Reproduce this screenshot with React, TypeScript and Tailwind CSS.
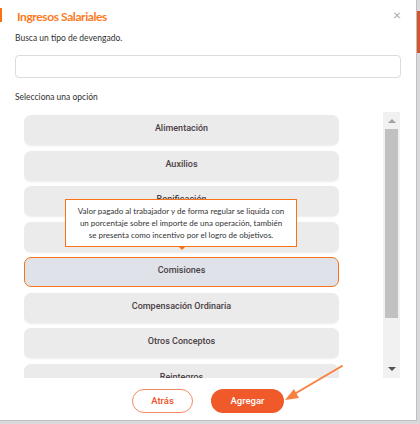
import React from 'react'

const options = [
  'Alimentación',
  'Auxilios',
  'Bonificación',
  'Cesantías',
  'Comisiones',
  'Compensación Ordinaria',
  'Otros Conceptos',
  'Reintegros',
]

const lato = { fontFamily: 'Lato, "Open Sans", sans-serif' }
const roboto = { fontFamily: 'Roboto, "Liberation Sans", sans-serif' }

export default function App() {
  const selected = 'Comisiones'

  return (
    <div className="relative w-[420px] h-[424px] overflow-hidden bg-[#d9d9dc]">
      {/* page behind the modal */}
      <div className="absolute right-0 top-[11px] h-[42px] w-[4px] bg-[#d4552e]" />

      <div
        className="relative flex h-[421px] w-[417px] flex-col border-r border-b border-[#bdbdc2] bg-white"
        style={lato}
      >
        <div className="absolute left-0 top-[8px] h-[14px] w-[2px] bg-[#f97316]" />

        {/* header */}
        <div className="flex items-start justify-between pl-[17px] pr-[15px] pt-[9px]">
          <h1 className="text-[12px] font-bold leading-[16px] tracking-[-0.4px] text-[#fb7a1e]">Ingresos Salariales</h1>
          <button className="mt-[-1px] text-[14px] leading-[14px] text-[#a8a8a8]">×</button>
        </div>

        <div className="px-[15px]">
          <p className="mt-[7px] text-[8.5px] leading-[12px] text-[#2f2f2f]">Busca un tipo de devengado.</p>
          <input
            type="text"
            className="mt-[11px] block h-[23px] w-[386px] rounded-[4px] border border-[#dcdcdc] bg-white px-2 text-[10px] outline-none"
          />
          <p className="mt-[13px] text-[8.5px] leading-[12px] text-[#2f2f2f]">Selecciona una opción</p>
        </div>

        {/* list */}
        <div className="relative mt-[9px] flex h-[266px] pl-[24px] pr-[16px]">
          <div className="h-full w-[315px] overflow-hidden pt-[3px]">
            <div className="flex flex-col gap-[5.5px]" style={roboto}>
              {options.map((o) => (
                <div
                  key={o}
                  className={
                    o === selected
                      ? 'flex h-[30px] shrink-0 items-center justify-center rounded-[7px] border border-[#f97316] bg-[#dfe2e8] pb-[2px] text-[9px] font-medium text-[#4a3e45]'
                      : 'flex h-[30px] shrink-0 items-center justify-center rounded-[7px] bg-[#ebebeb] pb-[2px] text-[9px] font-medium text-[#4a3e45] shadow-[0_1px_2px_rgba(0,0,0,0.08)]'
                  }
                >
                  {o}
                </div>
              ))}
            </div>
          </div>

          {/* scrollbar */}
          <div className="ml-auto flex h-full w-[17px] flex-col items-center bg-[#f1f1f1]">
            <div className="mt-[7px] h-0 w-0 border-x-[4px] border-b-[4px] border-x-transparent border-b-[#a3a3a3]" />
            <div className="mt-[6px] h-[189px] w-[13px] bg-[#c1c1c1]" />
            <div className="mt-auto mb-[7px] h-0 w-0 border-x-[4px] border-t-[4px] border-x-transparent border-t-[#505050]" />
          </div>

          {/* tooltip */}
          <div className="absolute left-[65px] top-[87px] w-[232px] border-[1.5px] border-[#f97316] bg-white px-1 py-[5px] text-center text-[8px] leading-[12px] text-[#333]">
            Valor pagado al trabajador y de forma regular se liquida con
            <br />
            un porcentaje sobre el importe de una operación, también
            <br />
            se presenta como incentivo por el logro de objetivos.
            <div className="absolute left-[112px] top-full h-0 w-0 border-x-[4px] border-t-[4px] border-x-transparent border-t-[#f97316]" />
          </div>
        </div>

        {/* footer */}
        <div className="mt-[11px] flex justify-center gap-[18px]" style={roboto}>
          <button className="h-[24px] w-[61px] rounded-full border border-[#f58a5e] bg-white text-[9.5px] font-medium text-[#f0512b]">
            Atrás
          </button>
          <button className="h-[24px] w-[73px] rounded-full bg-[#f05a2a] text-[9.5px] font-medium text-white">
            Agregar
          </button>
        </div>
      </div>

      {/* annotation arrow */}
      <svg className="absolute left-0 top-0 pointer-events-none" width="420" height="424">
        <line x1="342" y1="366" x2="291" y2="396" stroke="#f9803f" strokeWidth="2" strokeLinecap="round" />
        <polygon points="285,400 294,389 299,398" fill="#f9803f" />
      </svg>
    </div>
  )
}
